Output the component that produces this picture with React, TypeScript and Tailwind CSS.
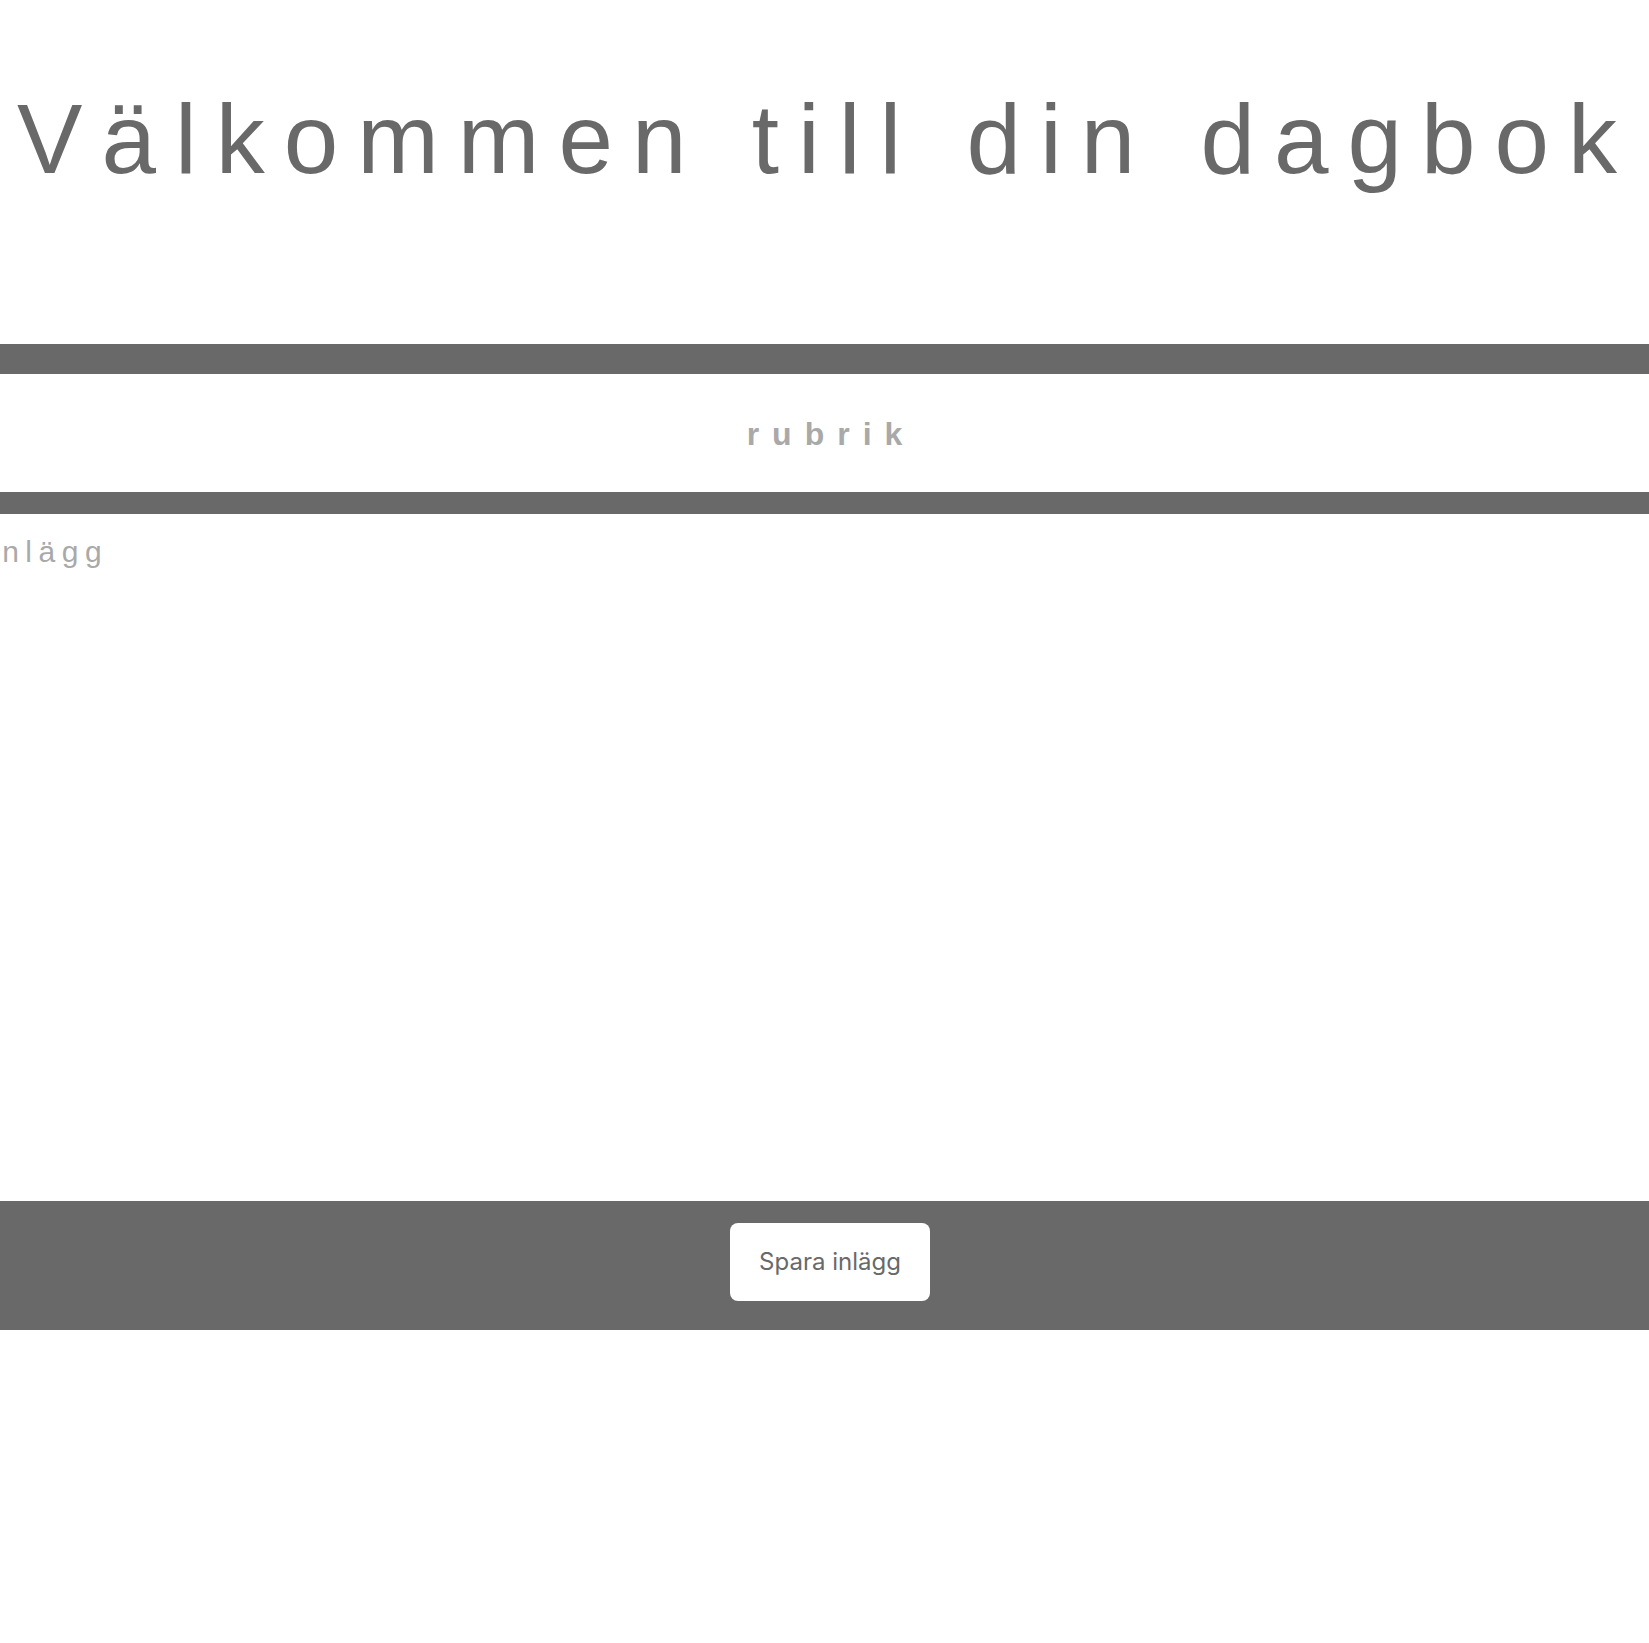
const App = () => {
  return (
    <div className="min-h-[1643px] bg-white" style={{ fontFamily: '"Liberation Sans", Arial, sans-serif' }}>
      <h1 className="pt-[83px] pl-[4px] text-center text-[98px] leading-[112px] tracking-[19px] text-[#696969] whitespace-nowrap">
        Välkommen till din dagbok
      </h1>

      <div className="mt-[149px]">
        <div className="border-t-[30px] border-b-[22px] border-[#696969] h-[170px] flex items-center justify-center">
          <span className="pl-[13px] pt-[1px] text-[32px] font-bold tracking-[13px] text-[#a9a9a9]">rubrik</span>
        </div>

        <div className="h-[687px] overflow-hidden">
          <div className="-ml-[11px] pt-[21px] text-[30px] leading-[34px] tracking-[6.5px] text-[#a9a9a9]">inlägg</div>
        </div>

        <div className="h-[129px] bg-[#696969] flex justify-center pt-[22px] pl-[11px]">
          <button
            className="w-[200px] h-[78px] rounded-[8px] bg-white text-[24px] text-[#696969]"
            style={{ fontFamily: 'Inter, "Noto Sans", sans-serif' }}
          >
            Spara inlägg
          </button>
        </div>
      </div>
    </div>
  );
};

export default App;
